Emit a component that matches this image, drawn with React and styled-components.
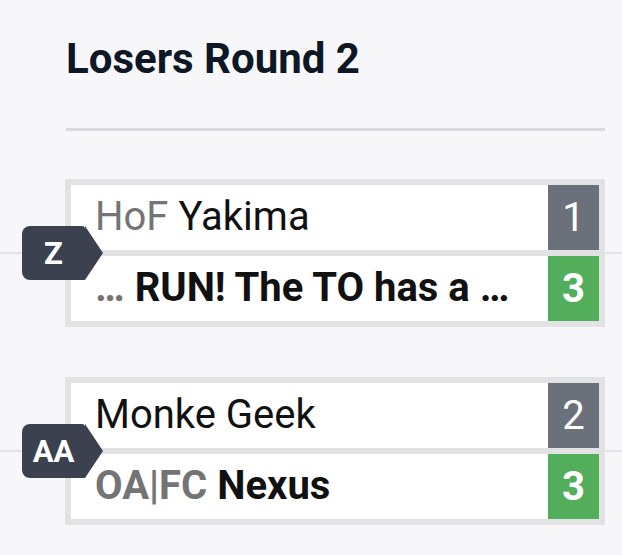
import React from 'react';
import styled, { createGlobalStyle } from 'styled-components';

const GlobalStyle = createGlobalStyle`
  html, body {
    margin: 0;
    padding: 0;
    background: #f7f7f9;
    font-family: Roboto, "Liberation Sans", sans-serif;
  }
`;

const Round = styled.div`
  width: 622px;
  padding-top: 35px;
`;

const Title = styled.h2`
  margin: 0 0 0 66px;
  font-size: 42px;
  line-height: 48px;
  font-weight: 700;
  color: #0e1726;
`;

const Divider = styled.div`
  margin: 45px 17px 0 66px;
  height: 3px;
  background: #d9d9de;
`;

const Matches = styled.div`
  margin-top: 48px;
  display: flex;
  flex-direction: column;
  gap: 50px;
`;

const MatchRow = styled.div`
  position: relative;
  display: flex;
  background: linear-gradient(
    to bottom,
    transparent calc(50% - 1px),
    #e2e2e5 calc(50% - 1px),
    #e2e2e5 calc(50% + 1px),
    transparent calc(50% + 1px)
  );
`;

const Badge = styled.div`
  position: absolute;
  left: 22px;
  top: 50%;
  transform: translateY(-50%);
  width: 63px;
  height: 54px;
  border-radius: 8px 3px 0 8px;
  background: #3b414e;
  color: #fff;
  font-size: 31px;
  font-weight: 700;
  display: flex;
  align-items: center;
  justify-content: center;
  z-index: 2;

  &::after {
    content: '';
    position: absolute;
    left: 100%;
    top: 0;
    border-left: 18px solid #3b414e;
    border-top: 27px solid transparent;
    border-bottom: 27px solid transparent;
  }
`;

const MatchBox = styled.div`
  margin-left: 65px;
  width: 528px;
  border: 6px solid #e2e2e5;
  background: #e2e2e5;
  display: flex;
  flex-direction: column;
  gap: 6px;
`;

const Slot = styled.div`
  display: flex;
  height: 65px;
`;

const Name = styled.div`
  flex: 1;
  min-width: 0;
  background: #fff;
  padding: 0 22px 0 24px;
  font-size: 40px;
  line-height: 64px;
  white-space: nowrap;
  overflow: hidden;
  color: #111;
  font-weight: ${(props) => (props.winner ? 700 : 400)};
`;

const Prefix = styled.span`
  color: #747474;
  margin-right: 10px;
`;

const Score = styled.div`
  width: 51px;
  display: flex;
  align-items: center;
  justify-content: center;
  color: #fff;
  font-size: 40px;
  font-weight: ${(props) => (props.winner ? 700 : 400)};
  background: ${(props) => (props.winner ? '#53ae5b' : '#6b717b')};
`;

const matches = [
  {
    id: 'Z',
    slots: [
      { prefix: 'HoF', name: 'Yakima', score: 1 },
      { prefix: '…', name: 'RUN! The TO has a …', score: 3, winner: true },
    ],
  },
  {
    id: 'AA',
    slots: [
      { name: 'Monke Geek', score: 2 },
      { prefix: 'OA|FC', name: 'Nexus', score: 3, winner: true },
    ],
  },
];

function App() {
  return (
    <Round>
      <GlobalStyle />
      <Title>Losers Round 2</Title>
      <Divider />
      <Matches>
        {matches.map((match) => (
          <MatchRow key={match.id}>
            <Badge>{match.id}</Badge>
            <MatchBox>
              {match.slots.map((slot) => (
                <Slot key={slot.name}>
                  <Name winner={slot.winner}>
                    {slot.prefix && <Prefix>{slot.prefix}</Prefix>}
                    {slot.name}
                  </Name>
                  <Score winner={slot.winner}>{slot.score}</Score>
                </Slot>
              ))}
            </MatchBox>
          </MatchRow>
        ))}
      </Matches>
    </Round>
  );
}

export default App;
